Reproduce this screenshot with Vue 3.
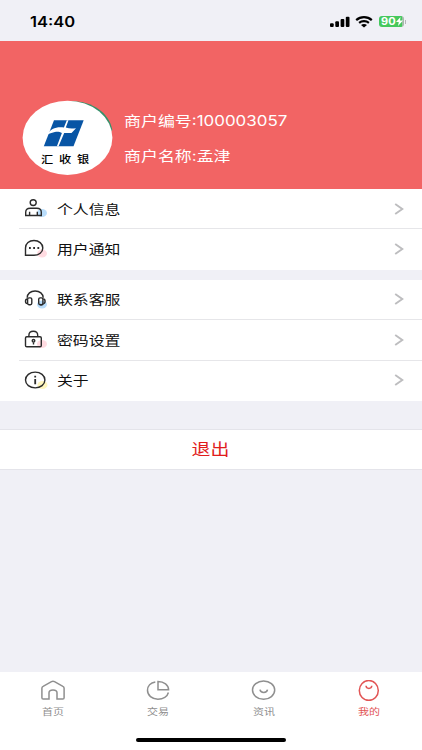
<template>
  <div class="page">
    <div class="status-bar">
      <span class="time">14:40</span>
      <div class="status-icons">
        <svg class="signal" width="20" height="12" viewBox="0 0 20 12">
          <rect x="0" y="7.3" width="3.7" height="3.7" rx="1" />
          <rect x="5.3" y="5.3" width="3.7" height="5.7" rx="1" />
          <rect x="10.6" y="3" width="3.7" height="8" rx="1" />
          <rect x="15.8" y="0.7" width="3.7" height="10.3" rx="1" />
        </svg>
        <svg class="wifi" width="18" height="12" viewBox="0 0 18 12">
          <path d="M1.2 4.1C5.6 .2 12.4 .2 16.8 4.1M4.1 6.8c2.8-2.3 7-2.3 9.8 0" fill="none" stroke="#000" stroke-width="2.2" />
          <path d="M6 9c1.7-1.3 4.3-1.3 6 0l-3 2.5z" />
        </svg>
        <div class="battery">
          <span class="battery-num">90</span>
          <svg width="7" height="9" viewBox="0 0 7 9"><path d="M4.5 0L0 5h2.8L2 9l5-5.4H4z" fill="#fff" /></svg>
        </div>
        <i class="battery-cap"></i>
      </div>
    </div>

    <div class="header">
      <svg class="avatar" width="91" height="76" viewBox="0 0 91 76">
        <path d="M50 1C70 1.5 87 12 90.3 30L86 34 48 6z" fill="#35906a" />
        <ellipse cx="45.5" cy="37.8" rx="44.9" ry="37.1" fill="#fff" />
        <path d="M32 20.2H61.7L51.5 46.2H21.8z" fill="#0855a5" />
        <path d="M44.8 20.2h1.7l-2.7 7.3c3.5 1.2 6.500 1.200 10.200.7l-4.500 4.900h-7.300L36.600 46.200h-1.700l5-13.100c-2-1.300-4.500-1.600-7-1.100-4 .8-6 2.300-10.500 3.300 3.500-1.700 5-4.500 8.200-6.300 3.500-1.900 7.500-2.100 11.300-1.500z" fill="#fff" />
      </svg>
      <span class="avatar-name">汇收银</span>
      <div class="merchant">
        <p><span>商户编号:100003057</span></p>
        <p><span>商户名称:孟津</span></p>
      </div>
    </div>

    <div class="group" v-for="(group, index) in groups" :key="index">
      <div class="cell" v-for="item in group" :key="item.name">
        <svg class="cell-icon" width="30" height="26" viewBox="0 0 30 26">
          <ellipse :cx="item.dot[0]" :cy="item.dot[1]" rx="5" ry="4" :fill="item.color" />
          <g v-if="item.icon === 'user'">
            <ellipse cx="11.2" cy="5.6" rx="3" ry="2.9" />
            <path d="M3.7 18.5v-3.3c0-2.5 1.9-4 4.5-4h6.6c2.6 0 4.500 1.500 4.500 4v3.300zM7.600 18.500v-3.700M15.300 18.500v-3.700" />
          </g>
          <g v-else-if="item.icon === 'message'">
            <path d="M3.5 18.3V11C3.5 6.5 7.2 3.5 12 3.5s8.800 3.100 8.800 7.400-4 7.400-8.800 7.400z" />
            <path d="M7 11h1.800M11.200 11h1.800M15.400 11h1.800" stroke-width="1.9" />
          </g>
          <g v-else-if="item.icon === 'service'">
            <path d="M5.2 9.8C5.2 5.8 8.5 3 13.1 3s8.100 2.800 8.100 6.800M21.300 16.300c-1 .8-2 .6-3.300.2" />
            <rect x="5.6" y="9.9" width="4.2" height="6.8" rx="1.4" />
            <rect x="16.7" y="9.9" width="4.2" height="6.8" rx="1.4" />
            <path d="M5.3 11c-2.4 0-2.4 4.6 0 4.600M21.200 11c2.500 0 2.500 4.600 0 4.600" />
          </g>
          <g v-else-if="item.icon === 'lock'">
            <rect x="3.5" y="8.8" width="15.8" height="10" rx="1.3" />
            <path d="M6.9 8.6V7.2c0-2.300 1.800-4 4.400-4s4.400 1.700 4.400 4v1.400M11.500 14.200v2.300" />
            <ellipse cx="11.5" cy="12.7" rx="1.3" ry="1.2" />
          </g>
          <g v-else>
            <ellipse cx="13.2" cy="11" rx="9.7" ry="7.9" />
            <path d="M13.2 10v5.3M13.2 6.8v1.6" stroke-width="1.8" />
          </g>
        </svg>
        <div class="cell-body">
          <span class="cell-name">{{ item.name }}</span>
          <svg class="arrow" width="10" height="12" viewBox="0 0 10 12"><path d="M1.2 1L8.300 6 1.200 11" /></svg>
        </div>
      </div>
    </div>

    <div class="logout"><span>退出</span></div>

    <div class="tabbar">
      <div :class="['tab', { active: tab.active }]" v-for="tab in tabs" :key="tab.name">
        <svg width="26" height="22" viewBox="0 0 26 22">
          <path v-if="tab.icon === 'home'" d="M1.9 8.3c0-1 .4-1.6 1.2-2l8.4-4.6c.9-.5 2.1-.5 3 0l8.4 4.6c.8.4 1.2 1 1.2 2v9.4c0 .8-.5 1.3-1.3 1.3h-5.8v-6.2c0-1.7-1.5-2.9-4-2.9s-4 1.2-4 2.9V19H3.2c-.8 0-1.3-.5-1.3-1.3z" />
          <g v-else-if="tab.icon === 'chart'">
            <path d="M10.3 1.9C5.6 2.7 2.5 6 2.5 10.3c0 5 4.5 8.9 10.4 8.9 5.3 0 9.5-2.7 10.5-6.7" />
            <path d="M13 1.5v8.3h10.6C23.6 5 19 1.5 13 1.5z" />
          </g>
          <g v-else-if="tab.icon === 'news'">
            <ellipse cx="12.6" cy="10.1" rx="11.1" ry="9.2" />
            <path d="M9 9.7c.5 3.7 7 3.7 7.5 0" />
          </g>
          <g v-else>
            <ellipse cx="12.8" cy="10.4" rx="9.5" ry="9.9" />
            <path d="M10 5.8c.3 3.500 5.500 3.500 5.800 0" />
          </g>
        </svg>
        <span>{{ tab.name }}</span>
      </div>
      <div class="home-indicator"></div>
    </div>
  </div>
</template>

<script setup>
import { ref } from 'vue'

const groups = ref([
  [
    { name: '个人信息', icon: 'user', color: '#b9ddfb', dot: [20, 16] },
    { name: '用户通知', icon: 'message', color: '#ffdbe1', dot: [20, 16.5] }
  ],
  [
    { name: '联系客服', icon: 'service', color: '#b9ddfb', dot: [20, 16.5] },
    { name: '密码设置', icon: 'lock', color: '#ffdbe1', dot: [20, 16] },
    { name: '关于', icon: 'about', color: '#fff6bd', dot: [20.5, 16] }
  ]
])

const tabs = ref([
  { name: '首页', icon: 'home' },
  { name: '交易', icon: 'chart' },
  { name: '资讯', icon: 'news' },
  { name: '我的', icon: 'mine', active: true }
])
</script>

<style>
body {
  background: #f0f0f6;
}
</style>

<style scoped>
.page {
  display: flex;
  flex-direction: column;
  height: 750px;
  overflow: hidden;
  background: #f0f0f6;
  font-family: Inter, "Noto Sans CJK SC", sans-serif;
}

/* 文字横向拉宽 */
.page span {
  display: inline-block;
  white-space: nowrap;
  transform: scaleX(1.22);
  transform-origin: left center;
}

.status-bar {
  display: flex;
  justify-content: space-between;
  box-sizing: border-box;
  height: 41px;
  padding: 0 16px 0 30px;
  flex-shrink: 0;
}

.page .time {
  font-size: 14px;
  font-weight: 600;
  line-height: 43px;
  transform: scaleX(1.18);
}

.status-icons {
  display: flex;
  align-items: center;
  height: 43px;
}

.wifi {
  margin: 0 6px 0 5px;
}

.battery {
  display: flex;
  align-items: center;
  box-sizing: border-box;
  width: 25px;
  height: 11px;
  padding-left: 2px;
  border-radius: 3px;
  background: linear-gradient(90deg, #45c85d 90%, #a3bda9 90%);
}

.battery .battery-num {
  width: 15px;
  font-size: 10px;
  font-weight: 700;
  line-height: 11px;
  color: #fff;
  transform: scaleX(1.1);
}

.battery-cap {
  width: 1px;
  height: 4px;
  margin-left: 1px;
  background: #b5b5ba;
}

.header {
  position: relative;
  display: flex;
  box-sizing: border-box;
  height: 148px;
  padding: 59px 0 0 22px;
  flex-shrink: 0;
  background: #f26464;
}

.avatar-name {
  position: absolute;
  left: 41px;
  top: 110px;
  font-size: 10px;
  font-weight: 500;
  line-height: 16px;
  letter-spacing: 4.8px;
}

.merchant {
  margin: 3px 0 0 11px;
}

.merchant p {
  height: 35px;
  margin: 0;
  font-size: 14px;
  line-height: 35px;
  color: #fff;
}

.page .merchant span {
  transform: scaleX(1.21);
}

.group {
  margin-bottom: 10px;
  flex-shrink: 0;
  background: #fff;
}

.cell {
  display: flex;
  height: 40.4px;
  padding-left: 22px;
}

.cell-icon {
  margin-top: 8px;
  fill: none;
  stroke: #2b2b2b;
  stroke-width: 1.4;
}

.cell-icon > ellipse {
  stroke: none;
}

.cell-body {
  display: flex;
  align-items: center;
  justify-content: space-between;
  flex: 1;
  box-sizing: border-box;
  margin-left: -33px;
  padding: 0 18px 0 38px;
  border-bottom: 1px solid #e6e6e9;
}

.cell:last-child .cell-body {
  border-bottom-color: transparent;
}

.cell-name {
  margin-top: -1px;
  font-size: 13px;
  color: #111;
}

.arrow {
  fill: none;
  stroke: #bdbdbf;
  stroke-width: 1.9;
}

.logout {
  height: 39px;
  margin-top: 18px;
  border-top: 1px solid #e4e4ea;
  border-bottom: 1px solid #e4e4ea;
  flex-shrink: 0;
  background: #fff;
  font-size: 15.5px;
  line-height: 40px;
  text-align: center;
  color: #e11c1c;
}

.page .logout span {
  transform-origin: center;
}

.tabbar {
  position: relative;
  display: flex;
  box-sizing: border-box;
  height: 78px;
  padding-top: 8px;
  margin-top: auto;
  background: #fff;
}

.tab {
  display: flex;
  flex-direction: column;
  align-items: center;
  flex: 1;
  font-size: 9px;
  color: #8f8f8f;
}

.tab svg {
  fill: none;
  stroke: currentColor;
  stroke-width: 1.5;
}

.page .tab span {
  line-height: 15px;
  margin-top: 2px;
  transform-origin: center;
}

.tab.active {
  color: #e25555;
}

.home-indicator {
  position: absolute;
  left: 136px;
  bottom: 8px;
  width: 150px;
  height: 4px;
  border-radius: 2px;
  background: #000;
}
</style>
